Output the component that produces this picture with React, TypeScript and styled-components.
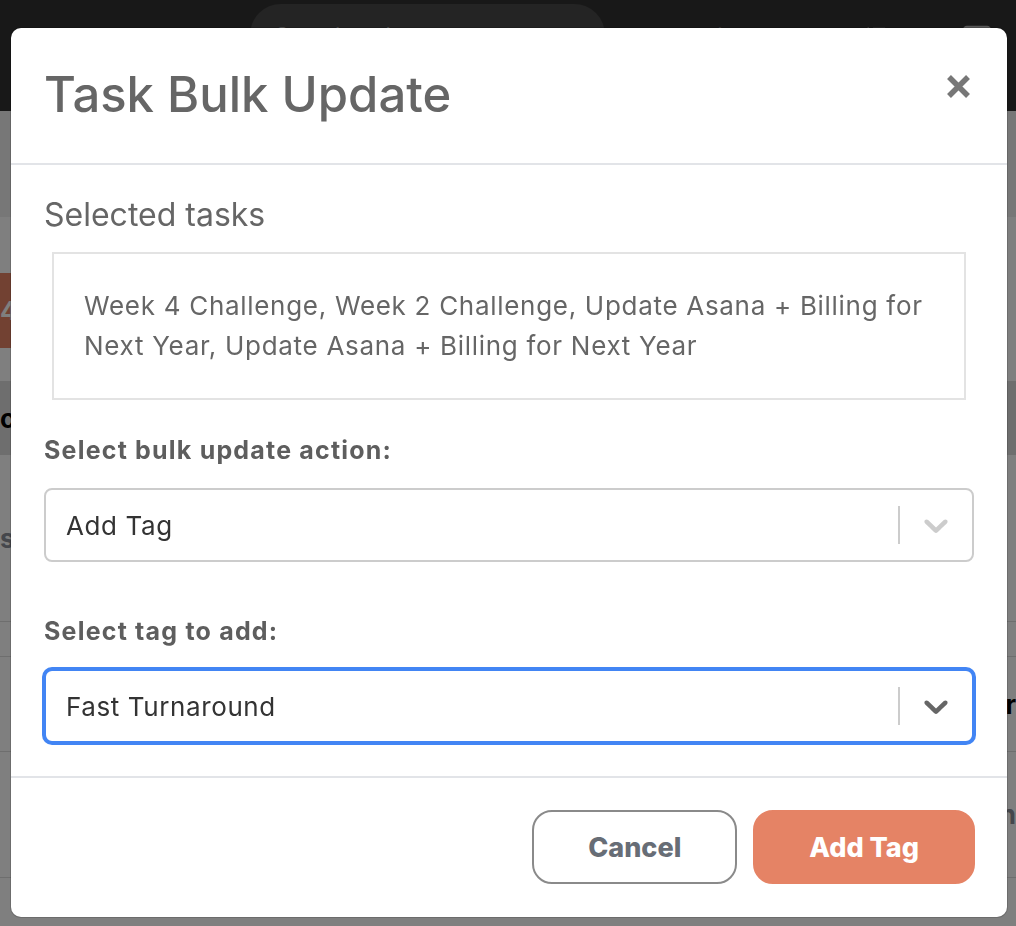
import React from "react";
import styled, { createGlobalStyle } from "styled-components";

const GlobalStyle = createGlobalStyle`
  html, body { margin: 0; padding: 0; }
  body {
    font-family: Inter, "Noto Sans", "Liberation Sans", sans-serif;
    background: #ffffff;
    overflow: hidden;
  }
  * { box-sizing: border-box; }
`;

/* ---------- background page ---------- */

const Page = styled.div`
  width: 1016px;
  height: 926px;
  overflow: hidden;
  display: flex;
  flex-direction: column;
  background: #ffffff;
`;

const TopBar = styled.header`
  height: 111px;
  flex: none;
  background: #313131;
  display: flex;
  align-items: flex-start;
  padding: 4px 0 0 250px;
`;

const SearchPill = styled.div`
  width: 355px;
  height: 62px;
  border-radius: 31px;
  background: #484848;
  color: #a8a8a8;
  font-size: 22px;
  padding: 18px 0 0 25px;
`;

const NavLink = styled.span`
  margin: 19px 0 0 77px;
  font-size: 22px;
  color: #b0b0b0;
`;

const NavIcon = styled.span<{ $gap: number }>`
  margin: 21px 0 0 ${(p) => p.$gap}px;
  color: #b0b0b0;
  display: flex;
`;

const SubBar = styled.div`
  height: 106px;
  flex: none;
  background: #eeeeee;
`;

const Toolbar = styled.div`
  height: 164px;
  flex: none;
  display: flex;
  align-items: flex-start;
  padding-top: 56px;
`;

const OrangeButton = styled.button`
  height: 75px;
  width: 120px;
  border: none;
  border-radius: 0 12px 12px 0;
  background: #e58365;
  color: #ffffff;
  font-family: inherit;
  font-size: 26px;
  font-weight: 700;
  text-align: left;
  padding: 0;
`;

const TableHeader = styled.div`
  height: 74px;
  flex: none;
  background: #dddddd;
  display: flex;
  align-items: center;
  font-size: 26px;
  font-weight: 700;
  color: #000;
`;

const Row = styled.div<{ $h: number }>`
  height: ${(p) => p.$h}px;
  flex: none;
  border-bottom: 1px solid #dddddd;
  display: flex;
  align-items: center;
  justify-content: space-between;
  font-size: 26px;
`;

const RowText = styled.span<{ $dark?: boolean }>`
  font-weight: 700;
  color: ${(p) => (p.$dark ? "#000" : "#8a8f98")};
`;

/* ---------- modal ---------- */

const Overlay = styled.div`
  position: fixed;
  inset: 0;
  background: rgba(0, 0, 0, 0.5);
  display: flex;
  align-items: flex-start;
  padding: 28px 0 0 11px;
`;

const Modal = styled.div`
  width: 996px;
  background: #ffffff;
  border-radius: 10px;
  box-shadow: 0 0 0 1px rgba(0, 0, 0, 0.15);
  display: flex;
  flex-direction: column;
  overflow: hidden;
`;

const Header = styled.div`
  display: flex;
  align-items: flex-start;
  justify-content: space-between;
  padding: 37px 36px 38px 33px;
  border-bottom: 2px solid #e2e4e8;
`;

const Title = styled.h1`
  margin: 0;
  font-size: 49px;
  line-height: 60px;
  font-weight: 500;
  color: #666666;
`;

const CloseButton = styled.button`
  margin-top: 9px;
  width: 25px;
  height: 25px;
  padding: 0;
  border: none;
  background: transparent;
  display: flex;
  cursor: pointer;
`;

const Body = styled.div`
  padding: 32px 33px 33px;
  display: flex;
  flex-direction: column;
`;

const SectionTitle = styled.div`
  font-size: 32px;
  line-height: 36px;
  color: #666666;
`;

const TaskBox = styled.div`
  margin: 19px 8px 0;
  border: 2px solid #e3e3e3;
  padding: 32px 30px;
  font-size: 26px;
  letter-spacing: 0.7px;
  line-height: 40px;
  color: #666666;
`;

const FieldLabel = styled.label<{ $top: number }>`
  display: block;
  margin-top: ${(p) => p.$top}px;
  font-size: 25px;
  letter-spacing: 1.2px;
  line-height: 36px;
  font-weight: 700;
  color: #5e5e5e;
`;

const SelectControl = styled.div<{ $focused?: boolean }>`
  margin-top: 20px;
  height: 74px;
  display: flex;
  align-items: stretch;
  border: 2px solid ${(p) => (p.$focused ? "#4285f4" : "#cccccc")};
  box-shadow: ${(p) => (p.$focused ? "0 0 0 2px #4285f4" : "none")};
  border-radius: 8px;
  background: #ffffff;
`;

const SelectValue = styled.div`
  flex: 1;
  display: flex;
  align-items: center;
  padding: 0 16px 0 20px;
  font-size: 26px;
  letter-spacing: 0.6px;
  color: #333333;
`;

const Separator = styled.span`
  width: 2px;
  margin: 16px 0;
  background: #cccccc;
`;

const Indicator = styled.span<{ $dark?: boolean }>`
  display: flex;
  align-items: center;
  padding: 0 16px;
  color: ${(p) => (p.$dark ? "#666666" : "#cccccc")};
`;

const Footer = styled.div`
  border-top: 2px solid #e2e4e8;
  padding: 32px 32px 33px;
  display: flex;
  justify-content: flex-end;
  gap: 16px;
`;

const Button = styled.button<{ $primary?: boolean }>`
  height: 74px;
  padding: 0 54px;
  border-radius: 20px;
  border: 2px solid ${(p) => (p.$primary ? "#e58365" : "#8a8a8a")};
  background: ${(p) => (p.$primary ? "#e58365" : "#ffffff")};
  color: ${(p) => (p.$primary ? "#ffffff" : "#676d76")};
  font-family: inherit;
  font-size: 27px;
  font-weight: 800;
  cursor: pointer;
`;

const Chevron = () => (
  <svg width="40" height="40" viewBox="0 0 20 20" fill="currentColor" aria-hidden="true">
    <path d="M4.516 7.548c0.436-0.446 1.043-0.481 1.576 0l3.908 3.747 3.908-3.747c0.533-0.481 1.141-0.446 1.574 0 0.436 0.445 0.408 1.197 0 1.615-0.406 0.418-4.695 4.502-4.695 4.502-0.217 0.223-0.502 0.335-0.787 0.335s-0.57-0.112-0.789-0.335c0 0-4.287-4.084-4.695-4.502s-0.436-1.170 0-1.615z" />
  </svg>
);

const Select = ({ value, focused }: { value: string; focused?: boolean }) => (
  <SelectControl $focused={focused}>
    <SelectValue>{value}</SelectValue>
    <Separator />
    <Indicator $dark={focused}>
      <Chevron />
    </Indicator>
  </SelectControl>
);

export default function App() {
  return (
    <>
      <GlobalStyle />
      <Page>
        <TopBar>
          <SearchPill>Search tasks…</SearchPill>
          <NavLink>Projects</NavLink>
          <NavIcon $gap={95}>
            <svg width="26" height="26" viewBox="0 0 26 26" fill="none" stroke="currentColor" strokeWidth="2.5">
              <path d="M8 3 C3 8 3 18 8 23" />
              <path d="M12 4 H22 L12 22 H22" />
            </svg>
          </NavIcon>
          <NavIcon $gap={75}>
            <svg width="30" height="30" viewBox="0 0 30 30" fill="none" stroke="currentColor" strokeWidth="2.5">
              <rect x="2" y="2" width="26" height="26" rx="3" />
            </svg>
          </NavIcon>
        </TopBar>
        <SubBar />
        <Toolbar>
          <OrangeButton>4</OrangeButton>
        </Toolbar>
        <TableHeader>c</TableHeader>
        <Row $h={167}>
          <RowText>s</RowText>
        </Row>
        <Row $h={35} />
        <Row $h={95}>
          <span />
          <RowText $dark>r</RowText>
        </Row>
        <Row $h={126}>
          <span />
          <RowText>n</RowText>
        </Row>
      </Page>
      <Overlay>
        <Modal role="dialog" aria-labelledby="bulk-title">
          <Header>
            <Title id="bulk-title">Task Bulk Update</Title>
            <CloseButton aria-label="Close">
              <svg width="25" height="25" viewBox="0 0 25 25" fill="none" stroke="#777777" strokeWidth="5.5">
                <path d="M3 3 L22 22 M22 3 L3 22" />
              </svg>
            </CloseButton>
          </Header>
          <Body>
            <SectionTitle>Selected tasks</SectionTitle>
            <TaskBox>
              Week 4 Challenge, Week 2 Challenge, Update Asana + Billing for Next Year, Update
              Asana + Billing for Next Year
            </TaskBox>
            <FieldLabel $top={32}>Select bulk update action:</FieldLabel>
            <Select value="Add Tag" />
            <FieldLabel $top={51}>Select tag to add:</FieldLabel>
            <Select value="Fast Turnaround" focused />
          </Body>
          <Footer>
            <Button>Cancel</Button>
            <Button $primary>Add Tag</Button>
          </Footer>
        </Modal>
      </Overlay>
    </>
  );
}
